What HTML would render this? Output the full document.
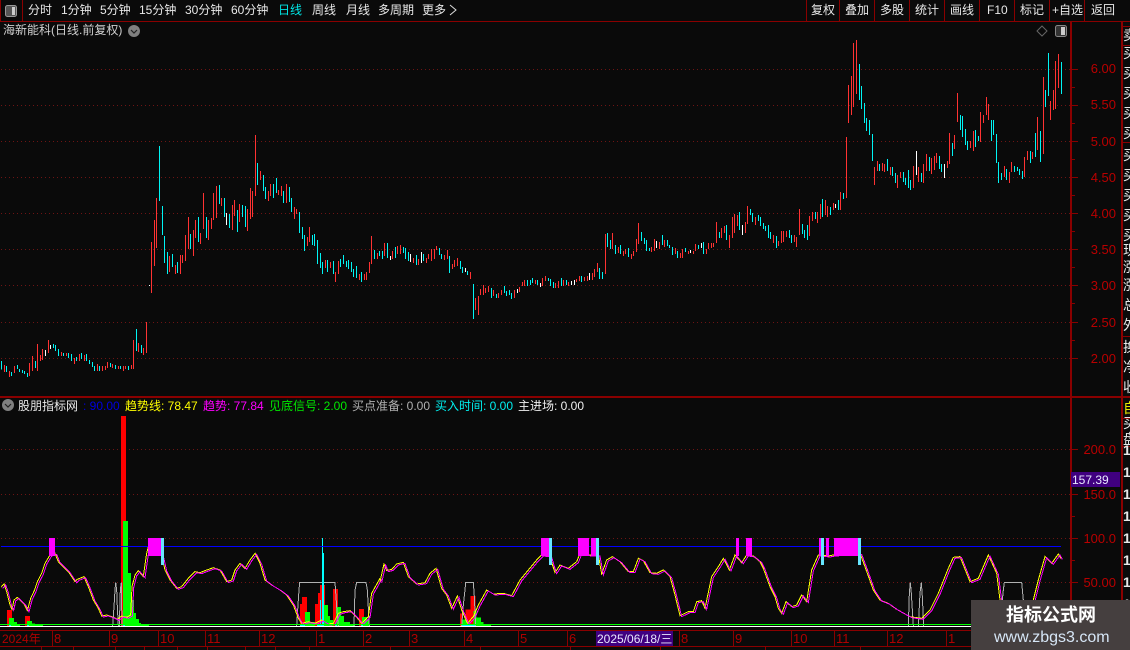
<!DOCTYPE html>
<html><head><meta charset="utf-8"><style>
html,body{margin:0;padding:0;background:#0a0a0a;width:1130px;height:650px;overflow:hidden}
svg{display:block}
text{font-family:"WenQuanYi Zen Hei","Liberation Sans","Noto Sans CJK SC",sans-serif;font-size:12px;white-space:pre}
.t text{fill:#e8e8e8}
.p text{fill:#b80000;font-family:"Liberation Sans",sans-serif;font-size:13px;text-anchor:end}
.m text{fill:#b00000;font-family:"Liberation Sans",sans-serif;font-size:13px}
.c{shape-rendering:crispEdges}
</style></head><body>
<svg width="1130" height="650" viewBox="0 0 1130 650" xmlns="http://www.w3.org/2000/svg">
<rect width="1130" height="650" fill="#0a0a0a"/>
<!-- grid -->
<g class="c" stroke="#6e1414" stroke-dasharray="1 3" fill="none">
<path d="M1 69.5H1070M1 105.5H1070M1 141.5H1070M1 177.5H1070M1 213.5H1070M1 249.5H1070M1 285.5H1070M1 322.5H1070M1 358.5H1070M1 449.5H1070M1 494.5H1070M1 538.5H1070M1 582.5H1070"/>
</g>
<!-- candles -->
<g class="c" fill="none" stroke-width="3">
<g transform="translate(.5,130) scale(.333333)">
<path stroke="#ff3232" d="M12 705V726M27 723V741M42 708V729M87 699V738M96 678V723M111 642V723M120 675V693M126 657V690M144 630V669M183 666V678M198 669V678M222 684V702M237 672V693M252 675V693M291 702V723M306 708V723M315 708V720M321 696V714M336 702V714M354 708V717M369 708V723M375 708V717M393 705V717M399 630V717M414 639V666M429 654V675M438 576V669M453 336V489M462 270V408M468 204V354M507 378V426M525 405V432M540 375V432M546 375V399M555 315V393M564 261V357M579 300V378M585 270V324M600 309V342M609 189V297M624 270V330M633 264V297M639 189V270M648 168V264M663 204V228M696 225V300M702 210V258M717 222V276M741 237V303M750 174V267M756 183V261M765 15V198M780 123V150M804 183V213M810 162V198M834 180V195M843 168V198M858 162V219M882 231V267M888 237V252"/>
<path stroke="#00f4f4" d="M3 693V718M18 708V726M33 726V738M51 705V717M57 717V726M66 720V729M72 723V732M81 729V741M105 693V714M159 642V654M165 645V663M174 657V678M189 669V678M204 669V684M213 672V693M228 681V693M243 669V687M258 672V693M267 690V702M276 696V711M282 708V723M297 708V723M330 699V711M345 705V717M360 708V717M384 708V720M408 597V663M423 645V669M477 48V213M486 228V315M492 318V399M501 366V432M516 372V411M531 396V429M570 312V357M594 261V336M618 261V324M657 165V222M672 204V261M687 252V294M711 240V306M726 225V261M735 228V291M771 99V165M789 135V183M795 171V207M819 162V204M828 144V189M849 183V219M867 171V216M873 204V246M897 246V309"/>
<path stroke="#fff" d="M135 660V678M150 645V657M447 465V468M678 249V285"/>
</g>
<g transform="translate(300.5,170) scale(.333333)">
<path stroke="#ff3232" d="M21 201V228M27 171V216M75 270V294M90 276V294M105 306V336M114 273V312M177 312V330M192 312V330M198 306V330M207 276V309M213 198V282M231 249V267M252 219V258M276 243V267M291 228V252M300 225V252M339 264V279M354 267V285M378 264V279M384 252V267M393 237V273M402 237V267M408 228V240M432 255V270M441 240V267M456 282V297M462 270V291M471 264V288M510 306V327M525 384V420M534 378V435M540 357V375M549 345V375M555 354V369M564 348V366M579 360V378M594 369V384M603 360V375M642 360V384M657 351V366M666 336V348M672 330V348M705 330V342M726 324V348M735 318V333M765 339V354M774 333V354M789 330V348M804 336V348M828 327V336M837 318V333M852 321V333M861 318V333M876 309V330M882 297V321M891 279V306"/>
<path stroke="#00f4f4" d="M6 171V207M12 195V243M36 195V225M42 192V228M51 210V282M60 249V294M66 276V312M81 270V306M99 273V312M120 267V291M129 255V282M138 273V291M144 270V297M153 276V306M159 297V321M168 288V324M183 306V336M222 240V267M237 243V258M246 243V267M261 219V264M285 231V264M309 231V249M315 234V267M324 246V273M348 255V285M369 252V273M417 234V255M423 252V267M447 258V309M480 273V297M486 291V309M501 303V315M519 342V447M573 354V384M588 372V384M612 348V369M618 363V378M627 360V375M633 369V387M681 330V348M690 330V345M696 324V339M711 330V345M744 324V333M750 327V348M759 336V354M783 324V348M798 330V345M843 318V336M897 294V327"/>
<path stroke="#fff" d="M270 258V270M330 252V276M363 246V279M495 294V306M651 357V369M720 339V351M813 333V345M822 330V345M867 309V330"/>
</g>
<g transform="translate(600.5,170) scale(.333333)">
<path stroke="#ff3232" d="M15 192V312M36 189V237M54 231V249M69 243V258M75 237V252M93 252V267M99 243V258M108 207V246M114 159V222M153 231V246M162 207V243M177 216V237M192 210V231M225 234V252M240 249V264M246 237V264M264 243V252M279 243V252M285 222V243M318 237V252M324 219V237M333 219V234M339 219V231M348 156V219M363 174V204M372 168V189M387 195V234M396 141V204M402 132V189M411 135V168M435 156V189M441 108V162M465 141V165M519 195V219M534 213V228M543 183V219M549 183V216M558 183V201M582 195V216M588 201V231M597 117V195M627 138V198M636 126V153M651 126V159M660 102V147M675 90V135M681 108V141"/>
<path stroke="#00f4f4" d="M6 306V327M21 189V231M30 210V237M45 225V252M60 225V252M84 234V261M123 186V213M132 204V222M138 210V243M147 234V243M186 195V225M201 210V228M207 225V234M216 231V255M231 243V264M255 234V246M294 225V237M309 216V252M357 186V204M378 165V210M417 126V180M450 117V135M456 129V156M474 135V153M480 141V168M489 159V177M495 168V183M504 165V204M510 186V207M528 198V234M567 180V204M573 195V219M606 162V192M612 180V204M621 165V210M645 126V147M666 87V141"/>
<path stroke="#fff" d="M168 213V234M270 240V249M303 219V234M426 165V195"/>
</g>
<g transform="translate(830.5,30) scale(.333333)">
<path stroke="#ff3232" d="M9 519V540M30 486V540M48 321V504M54 165V279M63 138V255M69 39V231M78 30V192M132 411V465M141 393V423M156 399V423M162 402V426M180 411V435M201 435V474M210 426V444M249 408V474M264 411V456M279 402V459M288 372V423M303 384V432M312 378V420M318 369V399M351 393V414M357 309V402M372 315V357M381 189V276M420 333V354M429 303V363M450 246V336M459 255V279M468 201V255M474 222V270M522 408V441M537 426V459M543 396V426M582 381V441M591 363V390M606 366V387M621 261V360M639 141V372M660 213V270M669 180V240M675 93V237M684 72V174"/>
<path stroke="#00f4f4" d="M0 531V555M24 510V540M39 489V507M87 102V210M93 168V237M102 219V279M108 264V303M117 270V315M126 312V393M147 402V423M171 387V423M186 411V438M195 429V459M219 426V456M225 444V465M234 420V474M240 450V480M273 429V456M297 381V423M327 378V417M333 402V426M366 339V378M390 255V300M396 258V321M405 297V345M411 333V360M435 300V351M444 318V333M483 270V333M489 270V315M498 312V399M504 396V459M513 429V450M528 417V450M552 408V426M561 411V423M567 417V435M576 423V447M600 363V399M615 309V381M630 303V396M645 180V231M654 69V198M693 96V192"/>
<path stroke="#fff" d="M15 522V534M258 363V435M342 402V444"/>
</g>
</g>
<!-- lower histogram -->
<g class="c">
<g transform="translate(0,530) scale(.333333)">
<path fill="#ff0000" d="M21 240H36V288H21ZM75 258H90V288H75ZM900 222H906V288H900ZM906 201H921V288H906ZM945 222H954V288H945ZM954 189H960V288H954ZM960 165H975V288H960ZM999 177H1014V288H999ZM1077 237H1092V288H1077Z"/>
<path fill="#00ff00" d="M27 264H42V288H27ZM42 276H51V288H42ZM51 282H60V288H51ZM81 273H96V288H81ZM96 280H105V288H96ZM105 283H129V288H105ZM915 246H930V288H915ZM930 276H945V288H930ZM966 225H984V288H966ZM984 258H990V288H984ZM990 270H1000V288H990ZM1008 231H1023V288H1008ZM1023 258H1032V288H1023ZM1032 276H1050V288H1032ZM1050 282H1065V288H1050ZM1086 261H1101V288H1086ZM1101 270H1107V288H1101Z"/>
</g>
<g transform="translate(380,530) scale(.333333)">
<path fill="#ff0000" d="M240 250H248V288H240ZM248 270H256V288H248ZM256 238H272V288H256ZM272 198H287V288H272Z"/>
<path fill="#00ff00" d="M248 268H260V288H248ZM260 276H272V288H260ZM280 243H290V288H280ZM290 263H303V288H290ZM303 276H310V288H303ZM310 283H333V288H310Z"/>
</g>
<rect x="121" y="416" width="5" height="210" fill="#ff0000"/>
<path fill="#00ff00" d="M123 521H128V626H123ZM128 573H131V626H128ZM131 600H134V626H131ZM134 613H136V626H134ZM136 619H139V626H136ZM139 623H141V626H139ZM141 624H149V626H141Z"/>
</g>
<!-- grey outlines -->
<g class="c" fill="none" stroke="#b0b0b0" stroke-width="3">
<g transform="translate(0,530) scale(.333333)">
<path d="M338 288L342 230L345 180L347 157L350 180L352 230L355 288M358 288L361 180L364 157L366 288M890 288L893 240L897 180L899 157H1005L1010 230L1015 288M1062 288L1065 180L1070 157H1098L1102 180L1108 288"/>
</g>
<g transform="translate(380,530) scale(.333333)"><path d="M245 288L250 225L255 180L257 157H280L283 200L287 288"/></g>
<g transform="translate(750,530) scale(.333333)"><path d="M475 288L478 190L481 157L484 190L490 288M505 288L510 190L514 157L517 200L521 288M757 210L760 180L763 157H815L820 210"/></g>
</g>
<!-- cyan spikes -->
<g class="c" fill="none" stroke="#00ffff">
<path d="M322.5 538V626M320.5 600V626M323.5 553V626"/>
<path d="M9 625.5H11M27 625.5H29M123 625.5H125M300 625.5H305M317 625.5H323M335 625.5H337M361 625.5H363M462 625.5H475"/>
</g>
<!-- indicator lines -->
<defs>
<path id="a" d="M3 172L12 162L20 185L30 225L36 238L42 210L52 202L62 212L72 222L82 242L92 205L103 182L112 155L125 130L135 100L150 75L165 70L175 95L190 110L205 125L225 155L232 148L252 140L265 170L280 210L295 235L305 258L320 255L340 262L352 268L365 258L380 262L392 255L396 170L405 135L415 122L430 140L440 70L445 50L485 75L495 120L510 150L530 175L545 170L565 145L585 125L600 128L615 122L640 113L660 120L680 155L695 150L705 120L720 100L735 115L750 90L765 70L780 100L795 150L815 165L840 180L860 195L880 225L895 265L905 280L925 275L945 280L965 270L985 282L1000 280L1015 250L1030 245L1050 242L1070 262L1085 280L1105 260L1115 190L1140 145"/>
<path id="b" d="M0 155L12 102L20 122L35 118L50 102L70 97L85 140L110 162L135 158L150 130L168 115L185 175L200 195L215 235L232 198L245 240L262 280L280 260L295 225L320 180L340 192L370 190L395 197L420 150L445 120L470 90L485 75L510 78L516 100L525 128L540 105L565 115L590 95L600 70L630 75L655 75L665 132L680 90L697 80L720 95L745 125L760 125L775 85L790 92L810 128L830 130L850 120L870 140L885 195L900 257L925 245L940 245L950 215L965 212L975 235L995 140L1015 110L1030 85L1048 120L1065 75L1085 98L1100 75L1120 78L1140 95"/>
<path id="d" d="M30 95L40 115L60 170L75 200L85 235L95 250L108 215L125 230L140 225L155 195L170 215L185 120L205 75L235 78L250 75L330 70L345 110L370 180L390 210L415 220L440 238L480 260L515 265L540 240L565 190L595 115L610 82L630 80L660 155L685 145L715 75L740 130L750 210L770 300L830 300L850 210L865 150L885 80L905 100L925 72L932 85"/>
</defs>
<g class="c" fill="none" stroke-width="3">
<g transform="translate(0,530) scale(.333333)"><use href="#a" stroke="#ffff00"/><use href="#a" stroke="#ff00ff" transform="translate(5,3)"/></g>
<g transform="translate(380,530) scale(.333333)"><use href="#b" stroke="#ffff00"/><use href="#b" stroke="#ff00ff" transform="translate(5,3)"/></g>
<g transform="translate(750,530) scale(.333333)"><use href="#d" stroke="#ffff00"/><use href="#d" stroke="#ff00ff" transform="translate(5,3)"/></g>
</g>
<!-- base lines -->
<g class="c">
<rect x="0" y="624" width="971" height="1" fill="#00ff00"/>
<rect x="0" y="626" width="971" height="1" fill="#ffffff"/>
<rect x="1" y="546" width="1060" height="1" fill="#0000ff"/>
<path fill="#ff00ff" d="M49 538H55V556H49ZM148 538H161V556H148ZM541 538H549V556H541ZM578 538H589V556H578ZM591 538H596V556H591ZM736 538H739V556H736ZM746 538H752V556H746ZM819 538H822V556H819ZM826 538H829V556H826ZM834 538H858V556H834Z"/>
<path fill="#66e6ff" d="M161 538H164V565H161ZM549 538H552V565H549ZM596 538H599V565H596ZM821 538H824V565H821ZM858 538H861V565H858Z"/>
</g>
<!-- frame lines -->
<g class="c" fill="#8a0000">
<rect x="0" y="21" width="1130" height="1"/>
<rect x="0" y="0" width="1" height="21"/>
<rect x="22" y="0" width="1" height="21"/>
<rect x="806" y="0" width="1" height="21"/><rect x="839" y="0" width="1" height="21"/><rect x="874" y="0" width="1" height="21"/><rect x="909" y="0" width="1" height="21"/><rect x="944" y="0" width="1" height="21"/><rect x="979" y="0" width="1" height="21"/><rect x="1014" y="0" width="1" height="21"/><rect x="1049" y="0" width="1" height="21"/><rect x="1084" y="0" width="1" height="21"/>
<rect x="1070" y="22" width="2" height="608"/>
<rect x="1121" y="22" width="2" height="608"/>
<rect x="0" y="396" width="1130" height="2"/>
<rect x="0" y="630" width="971" height="1"/>
<rect x="0" y="646" width="971" height="1"/>
<rect x="1121" y="26" width="9" height="1"/><rect x="1121" y="45" width="9" height="1"/><rect x="1121" y="142" width="9" height="1"/><rect x="1121" y="336" width="9" height="1"/><rect x="1121" y="418" width="9" height="1"/><rect x="1121" y="446" width="9" height="1"/>
<path d="M1072 69h6v1h-6zM1072 87h3v1h-3zM1072 105h6v1h-6zM1072 123h3v1h-3zM1072 141h6v1h-6zM1072 159h3v1h-3zM1072 177h6v1h-6zM1072 195h3v1h-3zM1072 213h6v1h-6zM1072 231h3v1h-3zM1072 249h6v1h-6zM1072 267h3v1h-3zM1072 285h6v1h-6zM1072 303h3v1h-3zM1072 322h6v1h-6zM1072 340h3v1h-3zM1072 358h6v1h-6zM1072 449h6v1h-6zM1072 516h3v1h-3zM1072 494h6v1h-6zM1072 538h6v1h-6zM1072 560h3v1h-3zM1072 582h6v1h-6z"/>
<path d="M52 631h1v15h-1zM109 631h1v15h-1zM158 631h1v15h-1zM205 631h1v15h-1zM259 631h1v15h-1zM316 631h1v15h-1zM363 631h1v15h-1zM409 631h1v15h-1zM464 631h1v15h-1zM518 631h1v15h-1zM567 631h1v15h-1zM679 631h1v15h-1zM733 631h1v15h-1zM791 631h1v15h-1zM834 631h1v15h-1zM887 631h1v15h-1zM946 631h1v15h-1z"/>
<path d="M41 646h1v4h-1zM73 646h1v4h-1zM115 646h1v4h-1zM144 646h1v4h-1zM177 646h1v4h-1zM207 646h1v4h-1zM245 646h1v4h-1zM275 646h1v4h-1zM309 646h1v4h-1zM390 646h1v4h-1zM480 646h1v4h-1zM570 646h1v4h-1zM660 646h1v4h-1zM765 646h1v4h-1zM860 646h1v4h-1z"/>
</g>
<!-- top bar icons -->
<rect x="5.5" y="5.5" width="11" height="11" rx="2" fill="#555" stroke="#999"/>
<rect x="12" y="7" width="3" height="8" fill="#ccc"/>
<circle cx="134" cy="31" r="6" fill="#808080"/><path d="M131 30L134 33L137 30" stroke="#222" fill="none" stroke-width="1.2"/>
<path d="M1042 26L1047 31L1042 36L1037 31Z" stroke="#666" fill="none"/>
<rect x="1055.5" y="25.5" width="11" height="11" rx="2" fill="#333" stroke="#888"/><rect x="1061" y="27" width="4" height="8" fill="#ccc"/>
<circle cx="8" cy="405" r="6" fill="#808080"/><path d="M5 404L8 407L11 404" stroke="#222" fill="none" stroke-width="1.2"/>
<!-- top bar text -->
<g class="t">
<text x="28" y="14">分时</text><text x="61" y="14">1分钟</text><text x="100" y="14">5分钟</text><text x="139" y="14">15分钟</text><text x="185" y="14">30分钟</text><text x="231" y="14">60分钟</text>
<text x="278" y="14" style="fill:#00e6e6">日线</text>
<text x="312" y="14">周线</text><text x="346" y="14">月线</text><text x="378" y="14">多周期</text><text x="422" y="14">更多</text>
<text x="811" y="14">复权</text><text x="845" y="14">叠加</text><text x="880" y="14">多股</text><text x="915" y="14">统计</text><text x="950" y="14">画线</text><text x="987" y="14">F10</text><text x="1020" y="14">标记</text><text x="1052" y="14">+自选</text><text x="1091" y="14">返回</text>
<text x="3" y="34" style="fill:#d0d0d0">海新能科(日线.前复权)</text>
<text x="18" y="410">股朋指标网</text>
</g>
<path d="M450 5L456 10L450 15" stroke="#ddd" fill="none"/>
<!-- legend -->
<text x="83" y="410" fill="#0000e0">: 90.00</text>
<text x="125" y="410" fill="#ffff00">趋势线: 78.47</text>
<text x="203" y="410" fill="#ff00ff">趋势: 77.84</text>
<text x="269" y="410" fill="#00e800">见底信号: 2.00</text>
<text x="352" y="410" fill="#b0b0b0">买点准备: 0.00</text>
<text x="435" y="410" fill="#00f0f0">买入时间: 0.00</text>
<text x="518" y="410" fill="#f0f0f0">主进场: 0.00</text>
<!-- price axis -->
<g class="p">
<text x="1116" y="73">6.00</text><text x="1116" y="109">5.50</text><text x="1116" y="146">5.00</text><text x="1116" y="182">4.50</text><text x="1116" y="218">4.00</text><text x="1116" y="254">3.50</text><text x="1116" y="290">3.00</text><text x="1116" y="327">2.50</text><text x="1116" y="363">2.00</text>
<text x="1116" y="454">200.0</text><text x="1116" y="499">150.0</text><text x="1116" y="543">100.0</text><text x="1116" y="587">50.00</text>
</g>
<rect x="1071" y="472" width="49" height="15" fill="#400080"/>
<text x="1072" y="484" fill="#e8e8ff">157.39</text>
<!-- month axis -->
<g class="m">
<text x="2" y="643" style="font-size:12px">2024年</text><text x="54" y="643">8</text><text x="111" y="643">9</text><text x="160" y="643">10</text><text x="207" y="643">11</text><text x="261" y="643">12</text><text x="318" y="643">1</text><text x="365" y="643">2</text><text x="411" y="643">3</text><text x="466" y="643">4</text><text x="520" y="643">5</text><text x="569" y="643">6</text><text x="681" y="643">8</text><text x="735" y="643">9</text><text x="793" y="643">10</text><text x="836" y="643">11</text><text x="889" y="643">12</text><text x="948" y="643">1</text>
</g>
<rect x="596" y="631" width="77" height="15" fill="#400080"/>
<text x="597" y="643" fill="#e8e8ff">2025/06/18/三</text>
<!-- right column -->
<g fill="#e8e8e8" style="font-size:14px">
<text x="1123" y="40" style="font-size:14px">卖</text><text x="1123" y="58" style="font-size:14px">买</text><text x="1123" y="78" style="font-size:14px">买</text><text x="1123" y="98" style="font-size:14px">买</text><text x="1123" y="118" style="font-size:14px">买</text><text x="1123" y="138" style="font-size:14px">买</text><text x="1123" y="160" style="font-size:14px">买</text><text x="1123" y="180" style="font-size:14px">买</text><text x="1123" y="200" style="font-size:14px">买</text><text x="1123" y="220" style="font-size:14px">买</text><text x="1123" y="240" style="font-size:14px">买</text><text x="1123" y="255" style="font-size:14px">现</text><text x="1123" y="272" style="font-size:14px">涨</text><text x="1123" y="290" style="font-size:14px">涨</text><text x="1123" y="310" style="font-size:14px">总</text><text x="1123" y="330" style="font-size:14px">外</text><text x="1123" y="352" style="font-size:14px">换</text><text x="1123" y="372" style="font-size:14px">净</text><text x="1123" y="392" style="font-size:14px">收</text>
<text x="1123" y="413" fill="#e8e800" style="font-size:14px">自</text><text x="1123" y="428" style="font-size:14px">买</text><text x="1123" y="444" style="font-size:14px">盘</text>
<g style="font-weight:700">
<text x="1123" y="455" style="font-size:14px">1</text><text x="1123" y="477" style="font-size:14px">1</text><text x="1123" y="499" style="font-size:14px">1</text><text x="1123" y="521" style="font-size:14px">1</text><text x="1123" y="543" style="font-size:14px">1</text><text x="1123" y="565" style="font-size:14px">1</text><text x="1123" y="587" style="font-size:14px">1</text><text x="1123" y="609" style="font-size:14px">1</text><text x="1123" y="631" style="font-size:14px">1</text></g>
</g>
<!-- watermark -->
<rect x="971" y="600" width="159" height="50" fill="#453f3f"/>
<text x="1006" y="621" fill="#fff" style="font-size:18px;font-weight:700;font-family:'Noto Sans CJK SC',sans-serif">指标公式网</text>
<text x="994" y="642" fill="#d6e6f6" style="font-size:16px;font-family:'Liberation Sans',sans-serif">www.zbgs3.com</text>
</svg>
</body></html>
